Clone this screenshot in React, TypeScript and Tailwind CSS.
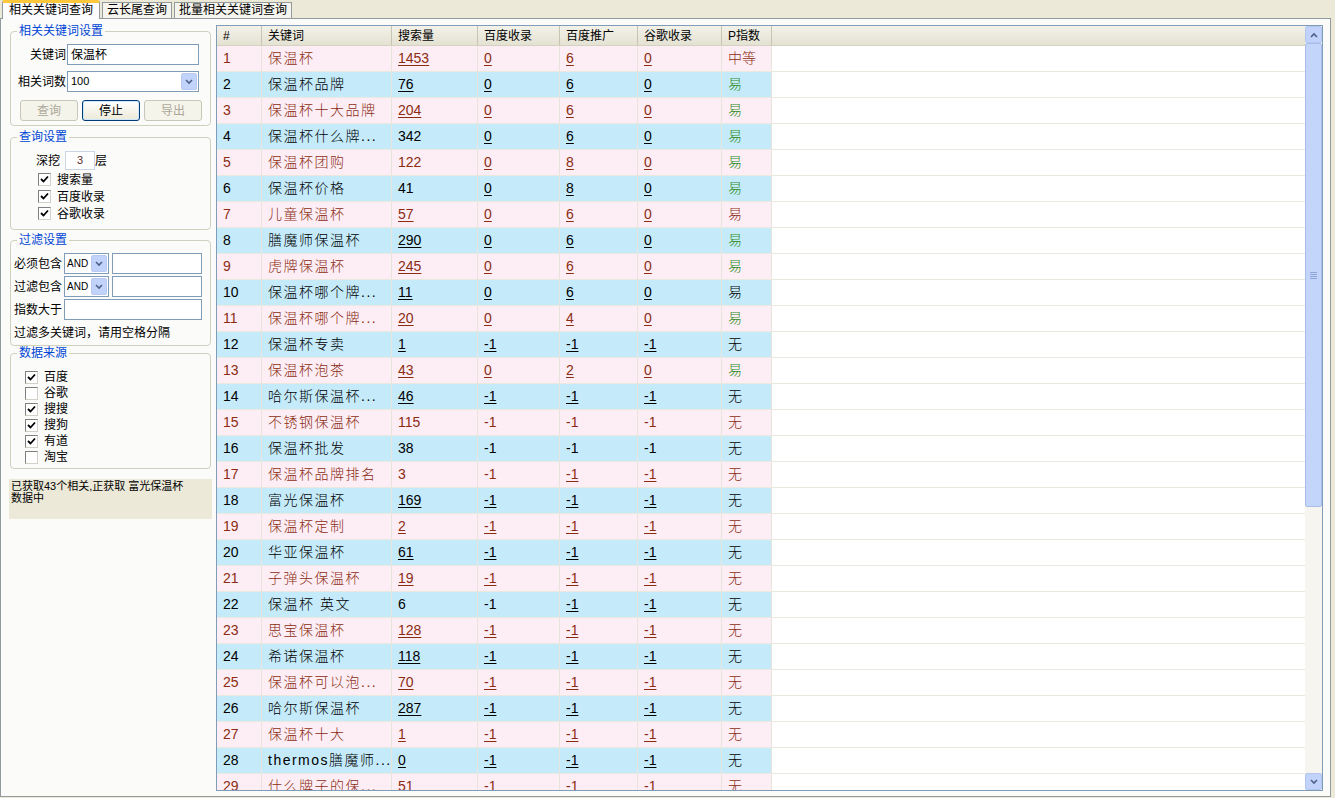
import React from "react";

type Row = {
  n: number;
  kw: string;
  sv: string;
  bd: string;
  bp: string;
  gg: string;
  p: string;
  u: [boolean, boolean, boolean, boolean];
  pc?: "green" | "brown" | "black";
};

const U4: [boolean, boolean, boolean, boolean] = [true, true, true, true];

const rows: Row[] = [
  { n: 1, kw: "保温杯", sv: "1453", bd: "0", bp: "6", gg: "0", p: "中等", u: U4, pc: "brown" },
  { n: 2, kw: "保温杯品牌", sv: "76", bd: "0", bp: "6", gg: "0", p: "易", u: U4, pc: "green" },
  { n: 3, kw: "保温杯十大品牌", sv: "204", bd: "0", bp: "6", gg: "0", p: "易", u: U4, pc: "green" },
  { n: 4, kw: "保温杯什么牌...", sv: "342", bd: "0", bp: "6", gg: "0", p: "易", u: [false, true, true, true], pc: "green" },
  { n: 5, kw: "保温杯团购", sv: "122", bd: "0", bp: "8", gg: "0", p: "易", u: [false, true, true, true], pc: "green" },
  { n: 6, kw: "保温杯价格", sv: "41", bd: "0", bp: "8", gg: "0", p: "易", u: [false, true, true, true], pc: "green" },
  { n: 7, kw: "儿童保温杯", sv: "57", bd: "0", bp: "6", gg: "0", p: "易", u: U4, pc: "brown" },
  { n: 8, kw: "膳魔师保温杯", sv: "290", bd: "0", bp: "6", gg: "0", p: "易", u: U4, pc: "green" },
  { n: 9, kw: "虎牌保温杯", sv: "245", bd: "0", bp: "6", gg: "0", p: "易", u: U4, pc: "green" },
  { n: 10, kw: "保温杯哪个牌...", sv: "11", bd: "0", bp: "6", gg: "0", p: "易", u: U4, pc: "black" },
  { n: 11, kw: "保温杯哪个牌...", sv: "20", bd: "0", bp: "4", gg: "0", p: "易", u: U4, pc: "green" },
  { n: 12, kw: "保温杯专卖", sv: "1", bd: "-1", bp: "-1", gg: "-1", p: "无", u: U4 },
  { n: 13, kw: "保温杯泡茶", sv: "43", bd: "0", bp: "2", gg: "0", p: "易", u: U4, pc: "green" },
  { n: 14, kw: "哈尔斯保温杯...", sv: "46", bd: "-1", bp: "-1", gg: "-1", p: "无", u: U4 },
  { n: 15, kw: "不锈钢保温杯", sv: "115", bd: "-1", bp: "-1", gg: "-1", p: "无", u: [false, false, false, false] },
  { n: 16, kw: "保温杯批发", sv: "38", bd: "-1", bp: "-1", gg: "-1", p: "无", u: [false, false, false, false] },
  { n: 17, kw: "保温杯品牌排名", sv: "3", bd: "-1", bp: "-1", gg: "-1", p: "无", u: [false, false, true, true] },
  { n: 18, kw: "富光保温杯", sv: "169", bd: "-1", bp: "-1", gg: "-1", p: "无", u: U4 },
  { n: 19, kw: "保温杯定制", sv: "2", bd: "-1", bp: "-1", gg: "-1", p: "无", u: U4 },
  { n: 20, kw: "华亚保温杯", sv: "61", bd: "-1", bp: "-1", gg: "-1", p: "无", u: U4 },
  { n: 21, kw: "子弹头保温杯", sv: "19", bd: "-1", bp: "-1", gg: "-1", p: "无", u: U4 },
  { n: 22, kw: "保温杯 英文", sv: "6", bd: "-1", bp: "-1", gg: "-1", p: "无", u: [false, false, true, true] },
  { n: 23, kw: "思宝保温杯", sv: "128", bd: "-1", bp: "-1", gg: "-1", p: "无", u: U4 },
  { n: 24, kw: "希诺保温杯", sv: "118", bd: "-1", bp: "-1", gg: "-1", p: "无", u: U4 },
  { n: 25, kw: "保温杯可以泡...", sv: "70", bd: "-1", bp: "-1", gg: "-1", p: "无", u: U4 },
  { n: 26, kw: "哈尔斯保温杯", sv: "287", bd: "-1", bp: "-1", gg: "-1", p: "无", u: U4 },
  { n: 27, kw: "保温杯十大", sv: "1", bd: "-1", bp: "-1", gg: "-1", p: "无", u: U4 },
  { n: 28, kw: "thermos膳魔师...", sv: "0", bd: "-1", bp: "-1", gg: "-1", p: "无", u: U4 },
  { n: 29, kw: "什么牌子的保...", sv: "51", bd: "-1", bp: "-1", gg: "-1", p: "无", u: [false, false, false, false] },
];

const cols = [
  { label: "#", w: "w-[45px]" },
  { label: "关键词", w: "w-[130px]" },
  { label: "搜索量", w: "w-[86px]" },
  { label: "百度收录", w: "w-[82px]" },
  { label: "百度推广", w: "w-[78px]" },
  { label: "谷歌收录", w: "w-[84px]" },
  { label: "P指数", w: "w-[50px]" },
];

function Check({ on }: { on: boolean }) {
  return (
    <span className="inline-flex w-[13px] h-[13px] border border-t-[#808080] border-l-[#808080] border-r-[#d4d0c8] border-b-[#d4d0c8] bg-white items-center justify-center shrink-0">
      {on && (
        <svg width="9" height="9" viewBox="0 0 9 9">
          <path d="M1 4 L3.5 6.5 L8 1.5" stroke="#000" strokeWidth="1.8" fill="none" />
        </svg>
      )}
    </span>
  );
}

function DropBtn() {
  return (
    <span className="w-[16px] h-[17px] bg-[#c1d3fb] border border-[#b9c9ef] rounded-[2px] flex items-center justify-center">
      <svg width="8" height="6" viewBox="0 0 8 6">
        <path d="M1 1 L4 4 L7 1" stroke="#4d6185" strokeWidth="1.6" fill="none" />
      </svg>
    </span>
  );
}

function Group({ title, className, children }: { title: string; className?: string; children: React.ReactNode }) {
  return (
    <div className={`relative border border-[#d0d0bf] rounded-[4px] ${className ?? ""}`}>
      <span className="absolute -top-[8px] left-[6px] px-[2px] bg-[#fbfbf9] text-[#0046d5] leading-[14px]">{title}</span>
      {children}
    </div>
  );
}

function Cell({ text, u, w, cls }: { text: string; u?: boolean; w: string; cls?: string }) {
  return (
    <div className={`${w} shrink-0 h-full flex items-center pl-[6px] border-r border-[#e8e4dc] overflow-hidden whitespace-nowrap ${cls ?? ""}`}>
      <span className={u ? "underline underline-offset-2" : ""}>{text}</span>
    </div>
  );
}

export default function App() {
  return (
    <div
      className="w-[1335px] h-[798px] bg-[#ece9d8] text-[12px] text-black overflow-hidden relative"
      style={{ fontFamily: '"Liberation Sans", "Noto Sans CJK SC", sans-serif' }}
    >
      {/* tabs */}
      <div className="flex h-[19px] items-end pl-[2px] gap-[2px]">
        <div className="h-[19px] px-[6px] bg-[#fcfcfe] border border-b-0 border-[#919b9c] border-t-[3px] border-t-[#ffc83c] rounded-t-[2px] leading-[15px] relative z-10">
          相关关键词查询
        </div>
        <div className="h-[17px] px-[4px] bg-[#f5f4ee] border border-b-0 border-[#919b9c] leading-[15px]">云长尾查询</div>
        <div className="h-[17px] px-[4px] bg-[#f5f4ee] border border-b-0 border-[#919b9c] leading-[15px]">批量相关关键词查询</div>
      </div>

      {/* tab body */}
      <div className="absolute top-[18px] left-0 w-[1331px] h-[779px] border border-[#919b9c] bg-[#fbfbf9] flex">
        {/* left panel */}
        <div className="w-[215px] shrink-0 pl-[9px] pt-[12px] flex flex-col">
          <Group title="相关关键词设置" className="w-[201px] h-[95px] pt-[12px]">
            <div className="flex items-center h-[21px]">
              <span className="w-[56px] text-right pr-[1px]">关键词</span>
              <div className="w-[132px] h-[21px] border border-[#7f9db9] bg-white flex items-center pl-[3px] text-[12px]">保温杯</div>
            </div>
            <div className="flex items-center h-[21px] mt-[6px]">
              <span className="w-[56px] text-right pr-[1px]">相关词数</span>
              <div className="w-[132px] h-[21px] border border-[#7f9db9] bg-white flex items-center pl-[3px] pr-[1px] justify-between text-[11px]">
                <span>100</span>
                <DropBtn />
              </div>
            </div>
            <div className="flex mt-[8px] ml-[9px] gap-[4px]">
              <div className="w-[58px] h-[21px] border border-[#c9c7ba] rounded-[3px] bg-[#f5f4ea] text-[#aca899] flex items-center justify-center">查询</div>
              <div className="w-[58px] h-[21px] border border-[#003c74] rounded-[3px] bg-gradient-to-b from-white to-[#ece9d8] flex items-center justify-center shadow-[inset_0_0_0_1px_#cee7ff]">停止</div>
              <div className="w-[58px] h-[21px] border border-[#c9c7ba] rounded-[3px] bg-[#f5f4ea] text-[#aca899] flex items-center justify-center">导出</div>
            </div>
          </Group>

          <Group title="查询设置" className="w-[201px] h-[93px] mt-[11px] pt-[13px]">
            <div className="flex items-center ml-[25px] h-[19px]">
              <span>深挖</span>
              <div className="w-[30px] h-[19px] ml-[5px] border border-[#c8d6e6] bg-white flex items-center justify-center text-[11px] text-[#5a2b2b]">3</div>
              <span>层</span>
            </div>
            <div className="ml-[27px] mt-[1px] flex flex-col">
              {["搜索量", "百度收录", "谷歌收录"].map((t) => (
                <div key={t} className="flex items-center gap-[6px] h-[17px]">
                  <Check on />
                  <span>{t}</span>
                </div>
              ))}
            </div>
          </Group>

          <Group title="过滤设置" className="w-[201px] h-[106px] mt-[10px] pt-[12px] pl-[3px]">
            {["必须包含", "过滤包含"].map((t, i) => (
              <div key={t} className={`flex items-center h-[21px] ${i ? "mt-[2px]" : ""}`}>
                <span className="w-[50px]">{t}</span>
                <div className="w-[45px] h-[21px] border border-[#7f9db9] bg-white flex items-center pl-[2px] pr-[1px] justify-between text-[10px]">
                  <span>AND</span>
                  <DropBtn />
                </div>
                <div className="w-[90px] h-[21px] ml-[3px] border border-[#7f9db9] bg-white" />
              </div>
            ))}
            <div className="flex items-center h-[21px] mt-[2px]">
              <span className="w-[50px]">指数大于</span>
              <div className="w-[138px] h-[21px] border border-[#7f9db9] bg-white" />
            </div>
            <div className="mt-[4px]">过滤多关键词，请用空格分隔</div>
          </Group>

          <Group title="数据来源" className="w-[201px] h-[116px] mt-[7px] pt-[15px] pl-[14px]">
            {[
              ["百度", true],
              ["谷歌", false],
              ["搜搜", true],
              ["搜狗", true],
              ["有道", true],
              ["淘宝", false],
            ].map(([t, on]) => (
              <div key={t as string} className="flex items-center gap-[6px] h-[16px]">
                <Check on={on as boolean} />
                <span>{t as string}</span>
              </div>
            ))}
          </Group>

          <div className="w-[203px] h-[40px] -ml-[1px] mt-[10px] bg-[#ece9d8] text-[11px] leading-[12px] pl-[2px] pt-[1px]">
            已获取43个相关,正获取 富光保温杯
            <br />
            数据中
          </div>
        </div>

        {/* grid */}
        <div className="mt-[6px] w-[1107px] h-[766px] border border-[#7f9db9] bg-white flex overflow-hidden">
          <div className="flex-1 flex flex-col overflow-hidden">
            <div className="h-[20px] shrink-0 flex bg-gradient-to-b from-[#f3f2ea] to-[#e4e2d2] border-b border-[#d6d2c2]">
              {cols.map((c) => (
                <div key={c.label} className={`${c.w} shrink-0 h-full flex items-center pl-[6px] border-r border-[#c7c5b2]`}>
                  {c.label}
                </div>
              ))}
              <div className="flex-1" />
            </div>
            {rows.map((r) => {
              const odd = r.n % 2 === 1;
              const tc = odd ? "text-[#8b2c12]" : "text-black";
              const pc =
                r.pc === "green" ? "text-[#2e8b1e]" : r.pc === "brown" ? "text-[#8b2c12]" : r.pc === "black" ? "text-black" : tc;
              return (
                <div key={r.n} className="h-[26px] shrink-0 flex border-b border-[#ebe8df] text-[14px]">
                  <div className={`flex h-full ${odd ? "bg-[#fdeef5]" : "bg-[#c5ebfb]"} ${tc}`}>
                    <Cell text={String(r.n)} w="w-[45px]" />
                    <Cell text={r.kw} w="w-[130px]" cls="tracking-[1.5px] font-light" />
                    <Cell text={r.sv} u={r.u[0]} w="w-[86px]" />
                    <Cell text={r.bd} u={r.u[1]} w="w-[82px]" />
                    <Cell text={r.bp} u={r.u[2]} w="w-[78px]" />
                    <Cell text={r.gg} u={r.u[3]} w="w-[84px]" />
                    <Cell text={r.p} w="w-[50px]" cls={`${pc} font-light`} />
                  </div>
                  <div className="flex-1" />
                </div>
              );
            })}
          </div>

          {/* scrollbar */}
          <div className="w-[17px] shrink-0 bg-[#f6f5ef] flex flex-col">
            <div className="h-[17px] bg-[#c1d3fb] border border-[#b4c5ee] rounded-[2px] flex items-center justify-center">
              <svg width="8" height="6" viewBox="0 0 8 6">
                <path d="M1 5 L4 2 L7 5" stroke="#4d6185" strokeWidth="1.6" fill="none" />
              </svg>
            </div>
            <div className="h-[464px] bg-[#c4d5fc] border border-[#a9bde9] rounded-[2px] flex items-center justify-center">
              <div className="flex flex-col gap-[1px]">
                <div className="w-[7px] h-[1px] bg-[#8fa7d8]" />
                <div className="w-[7px] h-[1px] bg-[#8fa7d8]" />
                <div className="w-[7px] h-[1px] bg-[#8fa7d8]" />
                <div className="w-[7px] h-[1px] bg-[#8fa7d8]" />
              </div>
            </div>
            <div className="flex-1" />
            <div className="h-[17px] bg-[#c1d3fb] border border-[#b4c5ee] rounded-[2px] flex items-center justify-center">
              <svg width="8" height="6" viewBox="0 0 8 6">
                <path d="M1 1 L4 4 L7 1" stroke="#4d6185" strokeWidth="1.6" fill="none" />
              </svg>
            </div>
          </div>
        </div>
      </div>
    </div>
  );
}
